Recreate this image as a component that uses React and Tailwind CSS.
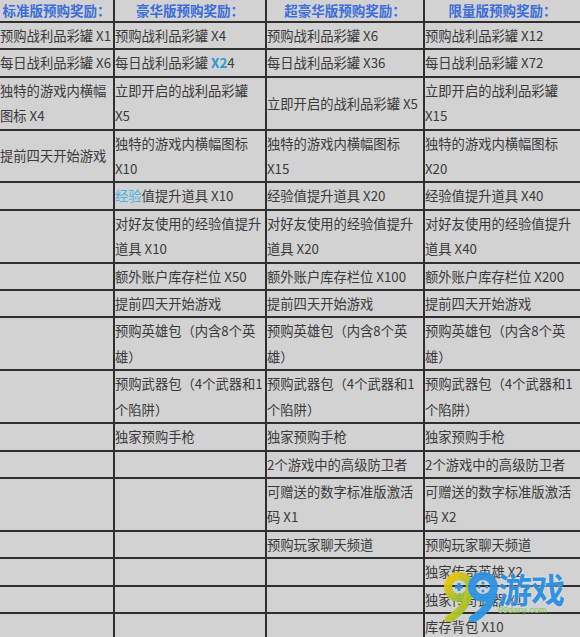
import React from 'react';

const headers = ['标准版预购奖励：', '豪华版预购奖励：', '超豪华版预购奖励：', '限量版预购奖励：'];

const rows = [
  ['预购战利品彩罐 X1', '预购战利品彩罐 X4', '预购战利品彩罐 X6', '预购战利品彩罐 X12'],
  [
    '每日战利品彩罐 X6',
    <>每日战利品彩罐 <span className="font-bold text-[#2a9ad8]">X2</span>4</>,
    '每日战利品彩罐 X36',
    '每日战利品彩罐 X72',
  ],
  ['独特的游戏内横幅图标 X4', '立即开启的战利品彩罐 X5', '立即开启的战利品彩罐 X5', '立即开启的战利品彩罐 X15'],
  ['提前四天开始游戏', '独特的游戏内横幅图标 X10', '独特的游戏内横幅图标 X15', '独特的游戏内横幅图标 X20'],
  ['', <><span className="text-[#46b2ea]">经验</span>值提升道具 X10</>, '经验值提升道具 X20', '经验值提升道具 X40'],
  ['', '对好友使用的经验值提升道具 X10', '对好友使用的经验值提升道具 X20', '对好友使用的经验值提升道具 X40'],
  ['', '额外账户库存栏位 X50', '额外账户库存栏位 X100', '额外账户库存栏位 X200'],
  ['', '提前四天开始游戏', '提前四天开始游戏', '提前四天开始游戏'],
  ['', '预购英雄包（内含8个英雄）', '预购英雄包（内含8个英雄）', '预购英雄包（内含8个英雄）'],
  ['', '预购武器包（4个武器和1个陷阱）', '预购武器包（4个武器和1个陷阱）', '预购武器包（4个武器和1个陷阱）'],
  ['', '独家预购手枪', '独家预购手枪', '独家预购手枪'],
  ['', '', '2个游戏中的高级防卫者', '2个游戏中的高级防卫者'],
  ['', '', '可赠送的数字标准版激活码 X1', '可赠送的数字标准版激活码 X2'],
  ['', '', '预购玩家聊天频道', '预购玩家聊天频道'],
  ['', '', '', '独家传奇英雄 X2'],
  ['', '', '', '独家传奇武器 X1'],
  ['', '', '', '库存背包 X10'],
];

// right border on all but the last column
const cellBorder = ['border-r-2', 'border-r-2', 'border-r-2', ''];

const Watermark = () => (
  <div className="absolute left-[440px] top-[570px] flex items-start opacity-95">
    <svg width="60" height="52" viewBox="0 0 60 52">
      <defs>
        <linearGradient id="nine1" x1="0" y1="0" x2="1" y2="1">
          <stop offset="0" stopColor="#f7c600" />
          <stop offset="1" stopColor="#7cc242" />
        </linearGradient>
      </defs>
      {/* first nine */}
      <circle cx="19" cy="17" r="11" fill="none" stroke="url(#nine1)" strokeWidth="8" />
      <path d="M29 22 Q27 38 9 49" fill="none" stroke="url(#nine1)" strokeWidth="8" strokeLinecap="round" />
      <path d="M15 17h8M19 13v8" stroke="#2b8fe0" strokeWidth="3" />
      {/* second nine */}
      <circle cx="43" cy="17" r="11" fill="none" stroke="#2d94e2" strokeWidth="8" />
      <path d="M53 22 Q51 38 33 49" fill="none" stroke="#2d94e2" strokeWidth="8" strokeLinecap="round" />
      <circle cx="43" cy="13" r="1.6" fill="#2d94e2" />
      <circle cx="43" cy="21" r="1.6" fill="#2d94e2" />
      <circle cx="39" cy="17" r="1.6" fill="#2d94e2" />
      <circle cx="47" cy="17" r="1.6" fill="#2d94e2" />
    </svg>
    <div className="-ml-[2px] flex flex-col">
      <span className="font-['Noto_Sans_CJK_SC',sans-serif] text-[34px] font-bold leading-[38px] tracking-[-1px] text-[#2b8fe0] [text-shadow:0_0_2px_#fff]">
        游戏
      </span>
      <span className="-mt-[3px] font-['Liberation_Sans',sans-serif] text-[9px] leading-[10px] text-[#86c24a]">99danji.com</span>
    </div>
  </div>
);

const App = () => {
  return (
    <div className="relative h-[637px] w-[580px] overflow-hidden bg-[#d2d2d2] font-['Noto_Sans_CJK_SC',sans-serif] text-[13.3px] text-[#3a3a3a]">
      <div className="grid grid-cols-[115px_152px_158px_155px]">
        {headers.map((h, i) => (
          <div
            key={h}
            className={`flex h-[23px] items-center justify-center border-b-2 border-[#2f2f2f] font-bold text-[13.5px] text-[#3a6edc] ${cellBorder[i]}`}
          >
            {h}
          </div>
        ))}
        {rows.map((row, r) =>
          row.map((cell, c) => (
            <div
              key={`${r}-${c}`}
              className={`flex items-center border-b-2 border-[#2f2f2f] leading-[25.4px] ${cellBorder[c]}`}
            >
              <span>{cell}</span>
            </div>
          ))
        )}
      </div>
      <Watermark />
    </div>
  );
};

export default App;
